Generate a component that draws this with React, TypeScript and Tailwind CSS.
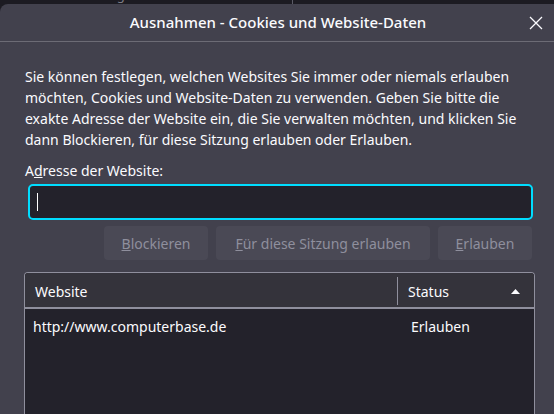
import React from 'react';

const font = { fontFamily: '"Noto Sans", "Open Sans", sans-serif' };

export default function App() {
  return (
    <div className="w-[554px] h-[414px] overflow-hidden bg-[#1c1b22] text-[#fbfbfe]" style={font}>
      {/* background window peeking above the dialog */}
      <div className="h-[4px] overflow-hidden relative">
        <div className="absolute left-[2px] top-[-13px] text-[13px] leading-[16px] text-[#7d7c86] whitespace-nowrap">
          ist funktioniert ausgeführt sind
        </div>
        <div className="absolute left-[292px] top-0 h-[4px] w-px bg-[#5b5b66]" />
      </div>

      <div className="h-[410px] bg-[#42414d] rounded-tl-[8px] flex flex-col">
        {/* title bar */}
        <div className="h-[38px] flex items-center relative border-b border-[#6c6b75] shrink-0">
          <div className="flex-1 text-center text-[15px] font-medium pl-[2px]">
            Ausnahmen - Cookies und Website-Daten
          </div>
          <button className="absolute right-[10px] top-[11px] w-[16px] h-[16px] flex items-center justify-center">
            <svg width="14" height="14" viewBox="0 0 14 14">
              <path d="M1 1 L13 13 M13 1 L1 13" stroke="#fbfbfe" strokeWidth="1.3" />
            </svg>
          </button>
        </div>

        <div className="pl-[25px] pr-[20px] pt-[24px] flex flex-col">
          <p className="text-[14px] leading-[21px]">
            Sie können festlegen, welchen Websites Sie immer oder niemals erlauben möchten, Cookies und
            Website-Daten zu verwenden. Geben Sie bitte die exakte Adresse der Website ein, die Sie verwalten
            möchten, und klicken Sie dann Blockieren, für diese Sitzung erlauben oder Erlauben.
          </p>

          <label className="text-[14px] leading-[21px] mt-[10px]">
            A<span className="underline">d</span>resse der Website:
          </label>

          <div className="mt-[3px] ml-[3px] w-[505px] h-[36px] rounded-[5px] border-2 border-[#00ddff] bg-[#23222b] flex items-center pl-[7px]">
            <div className="w-px h-[18px] bg-white" />
          </div>

          <div className="mt-[6px] flex justify-end gap-[8px] pr-[1px] w-[508px]">
            <button className="h-[34px] w-[104px] rounded-[4px] bg-[#4a4955] text-[#8f8f9d] text-[14px]">
              <span className="underline">B</span>lockieren
            </button>
            <button className="h-[34px] w-[214px] rounded-[4px] bg-[#4a4955] text-[#8f8f9d] text-[14px]">
              <span className="underline">F</span>ür diese Sitzung erlauben
            </button>
            <button className="h-[34px] w-[94px] rounded-[4px] bg-[#4a4955] text-[#8f8f9d] text-[14px]">
              <span className="underline">E</span>rlauben
            </button>
          </div>

          {/* table */}
          <div className="mt-[12px] -ml-[1px] w-[511px] h-[150px] rounded-t-[4px] border border-[#8f8f9d] border-b-0 bg-[#23222b] overflow-hidden">
            <div className="h-[36px] bg-[#34333b] border-b-2 border-[#8f8f9d] flex items-center text-[14px] pt-[2px]">
              <div className="w-[373px] pl-[10px] h-[28px] flex items-center border-r border-[#8f8f9d]">
                Website
              </div>
              <div className="flex-1 pl-[10px] flex items-center justify-between pr-[14px]">
                <span>Status</span>
                <svg width="9" height="5" viewBox="0 0 9 5">
                  <path d="M0 5 L4.5 0 L9 5 Z" fill="#fbfbfe" />
                </svg>
              </div>
            </div>
            <div className="flex text-[14px] leading-[20px] pt-[8px]">
              <div className="w-[386px] pl-[8px]">http://www.computerbase.de</div>
              <div className="flex-1">Erlauben</div>
            </div>
          </div>
        </div>
      </div>
    </div>
  );
}
